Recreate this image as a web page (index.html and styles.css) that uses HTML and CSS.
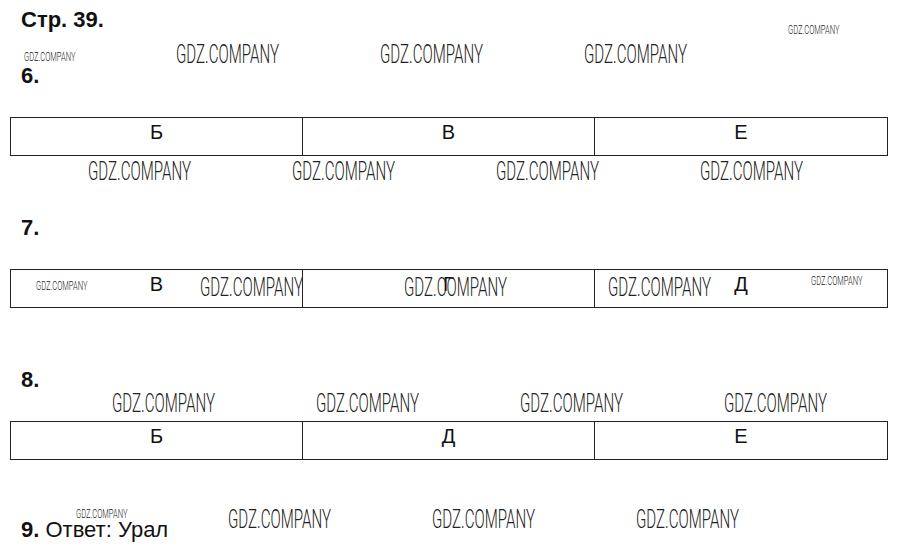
FILE: index.html
```html
<!DOCTYPE html>
<html lang="ru">
<head>
<meta charset="utf-8">
<title>Стр. 39</title>
<link rel="stylesheet" href="styles.css">
</head>
<body>
<div class="page">
  <h1 class="title">Стр. 39.</h1>

  <section class="task">
    <h2 class="num">6.</h2>
    <div class="answers">
      <div class="cell">Б</div>
      <div class="cell">В</div>
      <div class="cell">Е</div>
    </div>
  </section>

  <section class="task">
    <h2 class="num">7.</h2>
    <div class="answers">
      <div class="cell">В</div>
      <div class="cell">Г</div>
      <div class="cell">Д</div>
    </div>
  </section>

  <section class="task">
    <h2 class="num">8.</h2>
    <div class="answers">
      <div class="cell">Б</div>
      <div class="cell">Д</div>
      <div class="cell">Е</div>
    </div>
  </section>

  <p class="final"><b>9.</b> Ответ: Урал</p>

  <div class="wm small" style="left:24px;top:50px">GDZ.COMPANY</div>
  <div class="wm" style="left:176px;top:41px">GDZ.COMPANY</div>
  <div class="wm" style="left:380px;top:41px">GDZ.COMPANY</div>
  <div class="wm" style="left:584px;top:41px">GDZ.COMPANY</div>
  <div class="wm small" style="left:788px;top:23px">GDZ.COMPANY</div>

  <div class="wm" style="left:88px;top:158px">GDZ.COMPANY</div>
  <div class="wm" style="left:292px;top:158px">GDZ.COMPANY</div>
  <div class="wm" style="left:496px;top:158px">GDZ.COMPANY</div>
  <div class="wm" style="left:700px;top:158px">GDZ.COMPANY</div>

  <div class="wm small" style="left:36px;top:279px">GDZ.COMPANY</div>
  <div class="wm" style="left:200px;top:274px">GDZ.COMPANY</div>
  <div class="wm" style="left:404px;top:274px">GDZ.COMPANY</div>
  <div class="wm" style="left:608px;top:274px">GDZ.COMPANY</div>
  <div class="wm small" style="left:811px;top:274px">GDZ.COMPANY</div>

  <div class="wm" style="left:112px;top:390px">GDZ.COMPANY</div>
  <div class="wm" style="left:316px;top:390px">GDZ.COMPANY</div>
  <div class="wm" style="left:520px;top:390px">GDZ.COMPANY</div>
  <div class="wm" style="left:724px;top:390px">GDZ.COMPANY</div>

  <div class="wm small" style="left:76px;top:507px">GDZ.COMPANY</div>
  <div class="wm" style="left:228px;top:506px">GDZ.COMPANY</div>
  <div class="wm" style="left:432px;top:506px">GDZ.COMPANY</div>
  <div class="wm" style="left:636px;top:506px">GDZ.COMPANY</div>
</div>
</body>
</html>
```

FILE: styles.css
```css
html, body {
  margin: 0;
  padding: 0;
  background: #fff;
}

body {
  font-family: "Liberation Sans", Arial, sans-serif;
  color: #111;
}

.page {
  position: relative;
  width: 902px;
  height: 554px;
  overflow: hidden;
  padding: 9px 0 0 10px;
  box-sizing: border-box;
}

.title,
.num {
  margin: 0;
  padding-left: 11px;
  font-size: 22px;
  line-height: 21px;
  font-weight: bold;
}

.task {
  margin-top: 35px;
}

.task + .task {
  margin-top: 61px;
}

.num {
  margin-bottom: 31px;
}

.answers {
  display: grid;
  grid-template-columns: 291px 292px 293px;
  width: 878px;
  box-sizing: border-box;
  border: 1px solid #222;
}

.cell {
  height: 37px;
  box-sizing: border-box;
  padding-top: 4px;
  text-align: center;
  font-size: 20px;
  line-height: 20px;
  color: #111;
}

.cell + .cell {
  border-left: 1px solid #222;
}

.final {
  margin: 59px 0 0;
  padding-left: 11px;
  font-size: 22px;
  line-height: 21px;
}

.final b {
  font-weight: bold;
}

.wm {
  position: absolute;
  font-family: Roboto, "DejaVu Sans", sans-serif;
  font-weight: 300;
  font-size: 26px;
  line-height: 26px;
  color: #222;
  white-space: nowrap;
  transform: scaleX(0.58);
  transform-origin: 0 0;
}

.wm.small {
  font-size: 13px;
  line-height: 13px;
}
```
